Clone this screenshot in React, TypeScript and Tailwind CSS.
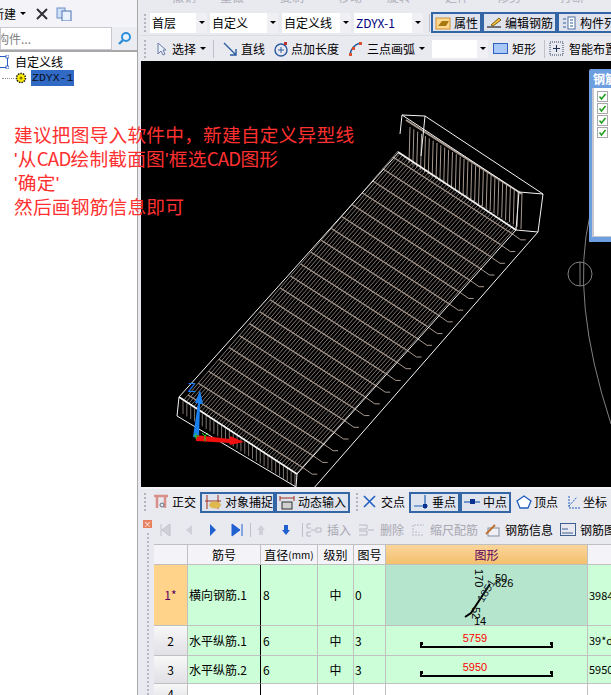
import React from "react";

const font = { fontFamily: '"Noto Sans CJK SC", "Liberation Sans", sans-serif' };
const latin = { fontFamily: '"Liberation Sans", sans-serif' };
const gridCols = "grid-cols-[33px_73px_57px_36px_32px_202px_1fr]";

function Grip() {
  return (
    <div className="mx-[3px] flex h-[18px] w-[3px] shrink-0 flex-col justify-between">
      {[0, 1, 2, 3, 4].map((i) => (
        <span key={i} className="h-[2px] w-[2px] bg-[#b4b4bc]" />
      ))}
    </div>
  );
}

function Sep() {
  return <span className="mx-[3px] h-[18px] w-px shrink-0 bg-[#c0c0c8]" />;
}

function Arrow() {
  return <span className="h-0 w-0 border-x-[3px] border-t-[3px] border-x-transparent border-t-black" />;
}

function Combo({ text, w, mono }: { text: string; w: string; mono?: boolean }) {
  return (
    <div className={`flex h-[20px] shrink-0 items-center justify-between bg-white pl-[2px] ${w}`}>
      <span className={mono ? "text-[12px] text-[#000080]" : "text-[12px] text-black"}>{text}</span>
      <span className="flex h-full w-[11px] items-center justify-center bg-[#f0f0f4]">
        <Arrow />
      </span>
    </div>
  );
}

function Caret() {
  return (
    <span className="mx-[4px] flex shrink-0">
      <Arrow />
    </span>
  );
}

function Ic({ children, w = 16, ml }: { children: React.ReactNode; w?: number; ml?: string }) {
  return (
    <svg width={w} height="16" viewBox={`0 0 ${w} 16`} className={`shrink-0 ${ml ?? ""}`}>
      {children}
    </svg>
  );
}

function Toggle({ icon, text, w }: { icon: React.ReactNode; text: string; w: string }) {
  return (
    <div className={`flex h-[21px] shrink-0 items-center gap-[3px] border-2 border-[#3465a4] bg-[#dfe3ee] pl-[2px] text-[12px] ${w}`}>
      {icon}
      <span className="whitespace-nowrap">{text}</span>
    </div>
  );
}

function Canvas() {
  // 3D wire model, corner points read from the picture
  const fl = [183, 402];
  const fr = [297, 474];
  const bl = [398, 152];
  const br = [516, 228];
  const mix = (a: number[], b: number[], t: number) => [a[0] + (b[0] - a[0]) * t, a[1] + (b[1] - a[1]) * t];
  const longs = Array.from({ length: 46 }, (_, i) => i / 45);
  const trans = Array.from({ length: 21 }, (_, i) => (i + 0.5) / 21);
  const backTicks = Array.from({ length: 30 }, (_, i) => i / 29);
  const frontTicks = Array.from({ length: 30 }, (_, i) => i / 29);
  return (
    <svg width="470" height="426" viewBox="141 62 470 426" className="block">
      <g stroke="#7f7570" strokeWidth="1" fill="none">
        {longs.map((t) => {
          const a = mix(fl, fr, t);
          const b = mix(bl, br, t);
          return <line key={t} x1={a[0]} y1={a[1]} x2={b[0]} y2={b[1]} />;
        })}
        {trans.map((t) => {
          const a = mix(fl, bl, t);
          const b = mix(fr, br, t);
          return (
            <g key={t}>
              <line x1={a[0]} y1={a[1]} x2={b[0]} y2={b[1]} stroke="#a8998f" strokeWidth="1.2" />
              <path d={`M${b[0]} ${b[1]} l10 7 l5 0`} stroke="#a8998f" />
            </g>
          );
        })}
        {backTicks.map((t) => {
          const a = mix([410, 128], [522, 194], t);
          return <line key={t} x1={a[0]} y1={a[1]} x2={a[0] - 1} y2={a[1] + 36} stroke="#a8998f" />;
        })}
        <line x1="406" y1="121" x2="522" y2="195" stroke="#a8998f" strokeWidth="2" />
        {frontTicks.map((t) => {
          const a = mix([183, 402], [295, 474], t);
          return <line key={t} x1={a[0]} y1={a[1]} x2={a[0]} y2={a[1] + 13} />;
        })}
      </g>
      <g stroke="#f4f4f4" strokeWidth="1" fill="none">
        <path d="M402 116 L425 117 L543 195 L538 233 L313 490" />
        <path d="M402 116 L519 193 L516 231 L297 475 L179 398 L177 417 L296 488 L297 475" />
        <path d="M399 153 L179 398" />
        <path d="M402 116 L400 135 M425 117 L421 157 M519 193 L543 195 M516 231 L538 233" />
        <path d="M398 153 L516 231" strokeWidth="1.6" />
        <path d="M179 398 L297 475" strokeWidth="1.6" />
      </g>
      <g fill="none" stroke="#808080">
        <circle cx="580" cy="275" r="12" />
        <path d="M580 263 V287" />
        <path d="M590 216 Q570 300 611 425" />
      </g>
      <text x="188" y="393" fontSize="13" fill="#1e7ff0" fontFamily="Liberation Sans">Z</text>
      <path d="M193 438 L198 404 L195 404 L200 391 L203 405 L200 405 L199 439 Z" fill="#1a80f0" />
      <path d="M196 436 L230 440 L230 437 L244 443 L230 446 L230 444 L196 442 Z" fill="#f01010" />
      <path d="M194 437 h5 M196 434 v6 M205 437 l-3 -3 M205 437 l3 -3 M205 437 v5" stroke="#10d020" fill="none" />
    </svg>
  );
}

function Row({ h, head, active, name, d, no, shapeTeal, shape, last }: { h: string; head: string; active?: boolean; name: string; d: string; no: string; shapeTeal?: boolean; shape: React.ReactNode; last: string }) {
  const cell = "flex items-center border-b border-l border-[#c0c0c0]";
  return (
    <div className={`grid ${gridCols} text-[12px] ${h}`}>
      <div className={`flex items-center justify-center border-b border-[#c0c0c0] ${active ? "bg-[#ffd48a] text-[#5b0060]" : "bg-gradient-to-b from-[#f8f8f8] to-[#e0e0e6]"}`}>{head}</div>
      <div className={`${cell} bg-[#ccffd7] pl-[1px]`}>{name}</div>
      <div className="flex items-center border-b border-l border-b-[#c0c0c0] border-l-black bg-[#ccffd7] pl-[2px]">{d}</div>
      <div className={`${cell} justify-center bg-[#ccffd7]`}>中</div>
      <div className={`${cell} bg-[#ccffd7] pl-[1px]`}>{no}</div>
      <div className={`${cell} justify-center overflow-visible ${shapeTeal ? "bg-[#b5e6cd]" : "bg-[#ccffd7]"}`}>{shape}</div>
      <div className={`${cell} overflow-hidden bg-[#ccffd7] pl-[1px] text-[11px] whitespace-nowrap`}>{last}</div>
    </div>
  );
}

function Bar({ value }: { value: string }) {
  return (
    <svg width="134" height="22" viewBox="0 0 134 22" className="shrink-0">
      <text x="55" y="12" textAnchor="middle" fontSize="11" fill="#ff0000" fontFamily="Liberation Sans">{value}</text>
      <path d="M1 12 V17 H132 V12" fill="none" stroke="#000" strokeWidth="2" />
      <path d="M0 12 h3 v3 h-3 z M130 12 h3 v3 h-3 z" fill="#000" />
    </svg>
  );
}

function BentBar() {
  return (
    <svg width="200" height="60" viewBox="0 0 200 60" className="shrink-0 overflow-visible">
      <path d="M78 52 L84 48 L101 22 L103 19" fill="none" stroke="#000" strokeWidth="2" />
      <g fontFamily="Liberation Sans" fontSize="11" fill="#000">
        <text transform="translate(88,4) rotate(90)">170</text>
        <text x="108" y="17">50</text>
        <text x="108" y="22">626</text>
        <text x="87" y="60">14</text>
        <text transform="translate(85,42) rotate(90)">52</text>
        <text transform="translate(96,38) rotate(-58)" fill="#20303a">1851</text>
      </g>
    </svg>
  );
}

export default function App() {
  return (
    <div className="relative flex h-[695px] w-[611px] overflow-hidden bg-[#e9e9f0] text-black" style={font}>
      <aside className="flex h-full w-[138px] shrink-0 flex-col border-r border-[#a8a8a8] bg-white">
        <div className="flex h-[27px] items-center bg-[#f4f4f8] text-[12px]">
          <span className="-ml-[8px] whitespace-nowrap">新建</span>
          <Caret />
          <svg width="14" height="14" viewBox="0 0 14 14" className="ml-[5px] shrink-0">
            <path d="M2 2 L12 12 M12 2 L2 12" stroke="#303038" strokeWidth="2" />
          </svg>
          <svg width="16" height="14" viewBox="0 0 16 14" className="ml-[7px] shrink-0">
            <rect x="1" y="1" width="8" height="10" fill="#cfe0f8" stroke="#6a90c8" />
            <rect x="6" y="4" width="9" height="10" fill="#eaf2ff" stroke="#4a70b0" />
          </svg>
        </div>
        <div className="flex h-[25px] items-stretch border-b-2 border-[#a8a8a8] bg-[#ecedf2]">
          <div className="flex w-[112px] items-center overflow-hidden border border-[#c8c8d0] bg-white text-[12px] text-[#808080]">
            <span className="-ml-[4px] whitespace-nowrap">构件...</span>
          </div>
          <div className="flex flex-1 items-center justify-center">
            <svg width="15" height="15" viewBox="0 0 15 15">
              <circle cx="9" cy="6" r="4" fill="#e8f4ff" stroke="#2f8fd8" strokeWidth="2" />
              <path d="M6 9 L2 13" stroke="#2f8fd8" strokeWidth="2.4" />
            </svg>
          </div>
        </div>
        <div className="flex flex-col pt-[2px] text-[12px]">
          <div className="flex h-[16px] items-center">
            <svg width="9" height="14" viewBox="0 0 9 14" className="shrink-0">
              <path d="M0 1.5 H7.5 V12.5 H0" fill="none" stroke="#2a5cc0" />
              <rect x="6" y="0" width="3" height="3" fill="#fff" stroke="#2a5cc0" strokeWidth="0.8" />
              <rect x="6" y="11" width="3" height="3" fill="#fff" stroke="#2a5cc0" strokeWidth="0.8" />
            </svg>
            <span className="ml-[6px] whitespace-nowrap">自定义线</span>
          </div>
          <div className="flex h-[16px] items-center">
            <span className="mb-[4px] ml-[2px] h-[5px] w-[12px] shrink-0 border-b border-dotted border-[#909090]" />
            <svg width="12" height="12" viewBox="0 0 12 12" className="ml-[1px] shrink-0">
              <circle cx="6" cy="6" r="4.5" fill="#ffee00" stroke="#202020" strokeDasharray="1.5 1" strokeWidth="1.6" />
              <circle cx="6" cy="6" r="1.5" fill="#807000" />
            </svg>
            <span className="ml-[4px] flex h-[16px] w-[43px] shrink-0 items-center whitespace-nowrap bg-[#316ac5] pl-[1px] text-[11.5px] text-[#0a1020]" style={{ fontFamily: '"Liberation Mono", monospace' }}>
              ZDYX-1
            </span>
          </div>
        </div>
      </aside>

      <main className="flex h-full min-w-0 flex-1 flex-col pl-[3px]">
        <div className="flex h-[10px] shrink-0 items-start overflow-hidden pl-[31px] text-[12px] leading-[12px] text-[#b0b0b8]">
          <span className="-mt-[9px] shrink-0 whitespace-nowrap">撤销</span>
          <span className="-mt-[9px] ml-[24px] shrink-0 whitespace-nowrap">重做</span>
          <span className="-mt-[9px] ml-[36px] shrink-0 whitespace-nowrap">复制</span>
          <span className="-mt-[9px] ml-[34px] shrink-0 whitespace-nowrap">移动</span>
          <span className="-mt-[9px] ml-[25px] shrink-0 whitespace-nowrap">旋转</span>
          <span className="-mt-[9px] ml-[34px] shrink-0 whitespace-nowrap">延伸</span>
          <span className="-mt-[9px] ml-[28px] shrink-0 whitespace-nowrap">修剪</span>
          <span className="-mt-[9px] ml-[39px] shrink-0 whitespace-nowrap">打断</span>
        </div>
        <div className="flex h-[26px] shrink-0 items-center overflow-hidden border-b border-[#dcdce4] bg-[#e9e9f0]">
          <Grip />
          <Combo text="首层" w="w-[57px]" />
          <Combo text="自定义" w="ml-[3px] w-[68px]" />
          <Combo text="自定义线" w="ml-[4px] w-[69px]" />
          <Combo text="ZDYX-1" w="ml-[3px] w-[69px]" mono />
          <span className="ml-[6px] h-[18px] w-px shrink-0 bg-[#c0c0c8]" />
          <span className="w-[1px] shrink-0" />
          <Toggle
            w="w-[51px]"
            text="属性"
            icon={
              <Ic w={16}>
                <rect x="1" y="3" width="14" height="11" fill="#ffd890" stroke="#d09030" />
                <path d="M3 11 L7 6 L14 6 L11 11 Z" fill="#a87810" />
              </Ic>
            }
          />
          <Toggle
            w="w-[75px]"
            text="编辑钢筋"
            icon={
              <Ic w={16}>
                <path d="M1 12 H15" stroke="#000" />
                <path d="M5 10 L13 3 L15 5 L7 11 Z" fill="#f0c040" stroke="#806010" />
              </Ic>
            }
          />
          <Toggle
            w="w-[70px]"
            text="构件列表"
            icon={
              <Ic w={16}>
                <rect x="7" y="2" width="7" height="12" fill="#fff" stroke="#5070a0" />
                <path d="M2 4 h3 M2 8 h3 M2 12 h3 M9 5 h3 M9 8 h3 M9 11 h3" stroke="#3060a0" />
              </Ic>
            }
          />
        </div>
        <div className="flex h-[25px] shrink-0 items-center overflow-hidden text-[12px]">
          <Grip />
          <svg width="12" height="14" viewBox="0 0 12 14" className="ml-[6px] shrink-0">
            <path d="M2 1 L2 12 L5 9 L7 13 L9 12 L7 8 L10 8 Z" fill="#eaf0ff" stroke="#6a7aa0" />
          </svg>
          <span className="ml-[4px] shrink-0 whitespace-nowrap">选择</span>
          <Caret />
          <Sep />
          <Ic w={16} ml="ml-[5px]">
            <path d="M2 2 L14 14 M14 8 V14 H8" fill="none" stroke="#2a5ca0" strokeWidth="1.4" />
          </Ic>
          <span className="ml-[3px] shrink-0 whitespace-nowrap">直线</span>
          <Ic w={16} ml="ml-[8px]">
            <circle cx="8" cy="9" r="6" fill="none" stroke="#2a5ca0" strokeWidth="1.4" />
            <path d="M8 6 v6 M5 9 h6" stroke="#2a5ca0" />
            <rect x="11" y="1" width="3" height="3" fill="#c03030" />
          </Ic>
          <span className="ml-[2px] shrink-0 whitespace-nowrap">点加长度</span>
          <Ic w={14} ml="ml-[9px]">
            <path d="M2 14 Q3 5 12 2" fill="none" stroke="#2a5ca0" strokeWidth="1.4" />
            <rect x="1" y="12" width="3" height="3" fill="#d85030" />
            <rect x="4" y="6" width="3" height="3" fill="#d85030" />
            <rect x="11" y="1" width="3" height="3" fill="#d85030" />
          </Ic>
          <span className="ml-[5px] shrink-0 whitespace-nowrap">三点画弧</span>
          <Caret />
          <div className="ml-[3px] flex h-[18px] w-[56px] shrink-0 justify-end bg-white">
            <span className="flex w-[11px] items-center justify-center bg-[#f0f0f4]">
              <Arrow />
            </span>
          </div>
          <svg width="15" height="11" viewBox="0 0 15 11" className="ml-[5px] shrink-0">
            <rect x="0.5" y="0.5" width="14" height="10" fill="#a8c8f8" stroke="#3060c0" />
          </svg>
          <span className="ml-[4px] shrink-0 whitespace-nowrap">矩形</span>
          <span className="ml-[8px] mr-[4px] h-[18px] w-px shrink-0 bg-[#c0c0c8]" />
          <Ic w={15}>
            <rect x="1" y="1" width="13" height="13" fill="#e8e8f0" stroke="#304060" strokeDasharray="1 1" />
            <path d="M7.5 4 v7 M4 7.5 h7" stroke="#203050" />
          </Ic>
          <span className="ml-[5px] shrink-0 whitespace-nowrap">智能布置</span>
        </div>

        <div className="relative h-[426px] shrink-0 bg-black">
          <Canvas />
          <div className="absolute left-[448px] top-[8px] flex h-[173px] w-[40px] flex-col rounded-tl-[2px] bg-[#6d9fe0] pb-[5px] pl-[3px]">
            <div className="h-[19px] overflow-hidden whitespace-nowrap pl-[1px] pt-[1px] text-[12px] font-bold text-white">钢筋显示</div>
            <div className="flex flex-1 flex-col gap-[1px] border-b-[1px] border-l-[2px] border-[#c8c8d0] bg-white pl-[3px] pt-[3px]">
              {[0, 1, 2, 3].map((i) => (
                <svg key={i} width="11" height="11" viewBox="0 0 11 11" className="shrink-0">
                  <rect x="0.5" y="0.5" width="10" height="10" fill="#fff" stroke="#a8a8a8" />
                  <path d="M2.5 5.5 L4.5 8 L8.5 3" fill="none" stroke="#20a020" strokeWidth="1.6" />
                </svg>
              ))}
            </div>
          </div>
        </div>

        <div className="flex h-[28px] shrink-0 items-center overflow-hidden border-t-2 border-[#f4f4f8] text-[12px]">
          <Grip />
          <Ic w={18} ml="ml-[2px]">
            <path d="M2 2 h14 M5 2 v12 M13 2 v12" stroke="#d89088" strokeWidth="2.5" fill="none" />
            <circle cx="10" cy="11" r="2" fill="none" stroke="#607080" />
          </Ic>
          <span className="ml-[2px] shrink-0 whitespace-nowrap">正交</span>
          <div className="ml-[4px] flex shrink-0">
            <Toggle
              w="w-[75px]"
              text="对象捕捉"
              icon={
                <Ic w={18}>
                  <path d="M3 1 v14 M14 1 v14 M1 7 h16" stroke="#a03020" fill="none" />
                  <ellipse cx="11" cy="11" rx="6" ry="3.5" fill="#e0b850" />
                </Ic>
              }
            />
            <Toggle
              w="w-[75px]"
              text="动态输入"
              icon={
                <Ic w={16}>
                  <path d="M1 2 v5 M15 2 v5 M1 4 h14" stroke="#a03020" fill="none" />
                  <rect x="3" y="8" width="10" height="7" fill="#d0d0d0" stroke="#303030" />
                </Ic>
              }
            />
          </div>
          <span className="w-[3px] shrink-0" />
          <Grip />
          <Ic w={15}>
            <path d="M2 2 L13 13 M13 2 L2 13" stroke="#2060c0" strokeWidth="1.6" />
          </Ic>
          <span className="ml-[4px] shrink-0 whitespace-nowrap">交点</span>
          <div className="ml-[4px] flex shrink-0">
            <Toggle
              w="w-[51px]"
              text="垂点"
              icon={
                <Ic w={16}>
                  <path d="M1 12 H15 M12 1 V15" stroke="#2060b0" strokeWidth="1.2" />
                  <rect x="10" y="10" width="4" height="4" fill="#0a3090" />
                </Ic>
              }
            />
            <Toggle
              w="w-[51px]"
              text="中点"
              icon={
                <Ic w={16}>
                  <path d="M0 8 H16" stroke="#2060b0" strokeWidth="1.2" />
                  <rect x="6" y="5" width="5" height="5" fill="#0a3090" />
                </Ic>
              }
            />
          </div>
          <Ic w={18} ml="ml-[4px]">
            <path d="M9 2 L16 7 L13 14 H5 L2 7 Z" fill="#fff" stroke="#2060c0" strokeWidth="1.3" />
          </Ic>
          <span className="ml-[1px] shrink-0 whitespace-nowrap">顶点</span>
          <Ic w={18} ml="ml-[5px]">
            <path d="M6 2 V14 H17 M6 12 L14 3" stroke="#2060c0" fill="none" strokeDasharray="2 1" />
          </Ic>
          <span className="ml-[2px] shrink-0 whitespace-nowrap">坐标</span>
        </div>

        <div className="flex min-h-0 flex-1">
          <div className="flex w-[13px] shrink-0 flex-col items-center pt-[5px]">
            <span className="flex h-[9px] w-[9px] items-center justify-center bg-[#e88060] text-[8px] leading-[8px] text-white">×</span>
            <span className="mt-[5px] h-full w-[2px] border-l-2 border-dotted border-[#b8b8c0]" />
          </div>
          <div className="flex min-w-0 flex-1 flex-col">
            <div className="flex h-[29px] shrink-0 items-center overflow-hidden text-[12px] text-[#a8a8b0]">
              <svg width="150" height="14" viewBox="0 0 150 14" className="shrink-0">
                <path d="M7 1 v12 M16 1 L8 7 L16 13 Z" fill="#d0d0d8" stroke="#c0c0c8" />
                <path d="M38 2 L32 7 L38 12 Z" fill="#d0d0d8" />
                <path d="M56 1 L62 7 L56 13 Z" fill="#2060d0" />
                <path d="M78 1 L86 7 L78 13 Z M88 1 v12" fill="#2060d0" stroke="#2060d0" />
                <path d="M96.5 0 v14 M148.5 0 v14" stroke="#c0c0c8" />
                <path d="M107 2 L111 7 H109 V12 H105 V7 H103 Z" fill="#d0d0d8" />
                <path d="M132 12 L136 7 H134 V2 H130 V7 H128 Z" fill="#2060d0" />
              </svg>
              <svg width="16" height="14" viewBox="0 0 16 14" className="ml-[2px] shrink-0">
                <path d="M5 1 H1 V5 H5 M5 9 H1 V13 H5 M5 7 H9 M10 5 H15 V9 H10 Z" fill="none" stroke="#b8b8c0" />
              </svg>
              <span className="ml-[5px] shrink-0 whitespace-nowrap">插入</span>
              <svg width="17" height="14" viewBox="0 0 17 14" className="ml-[7px] shrink-0">
                <path d="M1 2 H9 V6 H1 M1 8 H9 V12 H1 M10 7 H16" fill="none" stroke="#b8b8c0" />
              </svg>
              <span className="ml-[5px] shrink-0 whitespace-nowrap">删除</span>
              <svg width="13" height="14" viewBox="0 0 13 14" className="ml-[8px] shrink-0">
                <path d="M1 13 V2 H12 M4 13 V8 M7 13 V9 M10 13 V10" fill="none" stroke="#b8b8c0" strokeDasharray="2 1" />
              </svg>
              <span className="ml-[5px] shrink-0 whitespace-nowrap">缩尺配筋</span>
              <svg width="15" height="14" viewBox="0 0 15 14" className="ml-[7px] shrink-0">
                <rect x="3" y="5" width="11" height="8" fill="#f0f0f4" stroke="#8090a0" />
                <path d="M1 11 L10 2" stroke="#c07030" strokeWidth="2" />
              </svg>
              <span className="ml-[5px] shrink-0 whitespace-nowrap text-black">钢筋信息</span>
              <svg width="16" height="13" viewBox="0 0 16 13" className="ml-[7px] shrink-0">
                <rect x="0.5" y="0.5" width="15" height="12" fill="#e8e8f0" stroke="#406090" />
                <path d="M2 6 h6 M2 10 h11" stroke="#406090" />
              </svg>
              <span className="ml-[4px] shrink-0 whitespace-nowrap text-black">钢筋图库</span>
            </div>
            <div className={`grid h-[21px] shrink-0 ${gridCols} border-y border-[#c0c0c0] text-[12px]`}>
              <div className="bg-[#f4f4f8]" />
              <div className="flex items-center justify-center border-l border-[#c0c0c0] bg-[#f4f4f8]">筋号</div>
              <div className="flex items-center justify-center whitespace-nowrap border-l border-[#c0c0c0] bg-[#f4f4f8]">
                直径<span className="text-[10px]">(mm)</span>
              </div>
              <div className="flex items-center justify-center border-l border-[#c0c0c0] bg-[#f4f4f8]">级别</div>
              <div className="flex items-center justify-center border-l border-[#c0c0c0] bg-[#f4f4f8]">图号</div>
              <div className="flex items-center justify-center border-l border-[#c0c0c0] bg-gradient-to-b from-[#fad59a] to-[#f3c06c] text-[#5b0060]">图形</div>
              <div className="border-l border-[#c0c0c0] bg-[#f4f4f8]" />
            </div>
            <Row h="h-[61px] shrink-0" head="1*" active name="横向钢筋.1" d="8" no="0" shapeTeal shape={<BentBar />} last="3984" />
            <Row h="h-[30px] shrink-0" head="2" name="水平纵筋.1" d="6" no="3" shape={<Bar value="5759" />} last="39*d" />
            <Row h="h-[28px] shrink-0" head="3" name="水平纵筋.2" d="6" no="3" shape={<Bar value="5950" />} last="5950" />
            <div className={`grid h-[20px] shrink-0 ${gridCols} bg-white text-[12px]`}>
              <div className="flex items-center justify-center bg-gradient-to-b from-[#f8f8f8] to-[#e0e0e6]">4</div>
              <div className="border-l border-[#c0c0c0]" />
              <div className="border-l border-black" />
              <div className="border-l border-[#c0c0c0]" />
              <div className="border-l border-[#c0c0c0]" />
              <div className="border-l border-[#c0c0c0]" />
              <div className="border-l border-[#c0c0c0]" />
            </div>
          </div>
        </div>
      </main>

      <div className="pointer-events-none absolute left-[14px] top-[122px] text-[18.7px] leading-[24px] tracking-[0.22px] whitespace-nowrap text-[#ff3030]">
        <p className="h-[24px]">建议把图导入软件中，新建自定义异型线</p>
        <p className="h-[24px]">
          <span style={latin}>'</span>从<span className="tracking-[-0.8px]">CAD</span>绘制截面图<span style={latin}>'</span>框选<span className="tracking-[-0.8px]">CAD</span>图形
        </p>
        <p className="h-[24px]">
          <span style={latin}>'</span>确定<span style={latin}>'</span>
        </p>
        <p className="h-[24px]">然后画钢筋信息即可</p>
      </div>
    </div>
  );
}
